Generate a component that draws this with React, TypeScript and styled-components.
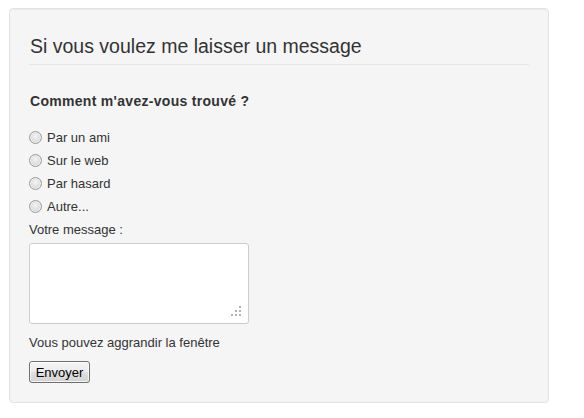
import React from "react";
import styled, { createGlobalStyle } from "styled-components";

const GlobalStyle = createGlobalStyle`
  html, body { margin: 0; padding: 0; background: #ffffff; }
  body {
    font-family: "Liberation Sans", Arial, sans-serif;
    font-size: 13px;
    color: #333333;
  }
`;

const Page = styled.div`
  padding: 8px 0 0 9px;
`;

const Well = styled.form`
  box-sizing: border-box;
  width: 540px;
  padding: 19px;
  background: #f5f5f5;
  border: 1px solid #e3e3e3;
  border-radius: 4px;
  box-shadow: inset 0 1px 1px rgba(0, 0, 0, 0.05);
  display: flex;
  flex-direction: column;
  align-items: flex-start;
`;

const Legend = styled.h2`
  align-self: stretch;
  margin: 0;
  font-size: 19.5px;
  font-weight: normal;
  line-height: 36px;
  color: #333333;
  border-bottom: 1px solid #e6e6e6;
  padding-left: 1px;
`;

const Question = styled.h3`
  margin: 26px 0 0;
  padding-left: 1px;
  font-size: 14px;
  font-weight: bold;
  line-height: 20px;
  letter-spacing: 0.3px;
  color: #333333;
`;

const Options = styled.div`
  margin-top: 15px;
  display: flex;
  flex-direction: column;
`;

const Option = styled.label`
  display: flex;
  align-items: center;
  height: 23px;
  line-height: 23px;
  gap: 5px;
  cursor: pointer;
`;

const Radio = styled.input.attrs({ type: "radio" })`
  appearance: none;
  -webkit-appearance: none;
  box-sizing: border-box;
  width: 13px;
  height: 13px;
  margin: 0;
  border-radius: 50%;
  border: 1px solid #9a9a9a;
  background: radial-gradient(circle at 50% 40%, #f4f4f4 0%, #e2e2e2 45%, #c9c9c9 100%);
  box-shadow: inset 0 0 0 1px #f0f0f0;
`;

const FieldLabel = styled.label`
  display: block;
  line-height: 23px;
`;

const AreaWrap = styled.div`
  position: relative;
  margin-top: 2px;
  width: 220px;
  height: 81px;
`;

const TextArea = styled.textarea`
  box-sizing: border-box;
  display: block;
  width: 220px;
  height: 81px;
  margin: 0;
  padding: 4px;
  resize: none;
  background: #ffffff;
  border: 1px solid #cccccc;
  border-radius: 3px;
  font-family: "Liberation Sans", Arial, sans-serif;
  font-size: 13px;
  color: #333333;
  outline: none;
`;

const Grip = styled.svg`
  position: absolute;
  right: 8px;
  bottom: 8px;
  pointer-events: none;
`;

const Hint = styled.p`
  margin: 7px 0 0;
  line-height: 23px;
`;

const Button = styled.button`
  box-sizing: border-box;
  margin-top: 7px;
  height: 22px;
  width: 61px;
  padding: 0;
  font-family: "Liberation Sans", Arial, sans-serif;
  font-size: 13px;
  color: #000000;
  border: 1px solid #707070;
  border-radius: 3px;
  background: linear-gradient(#f4f4f4 0%, #ececec 50%, #e0e0e0 51%, #d4d4d4 100%);
  box-shadow: inset 0 0 0 1px rgba(255, 255, 255, 0.7);
  cursor: pointer;
`;

const options = ["Par un ami", "Sur le web", "Par hasard", "Autre..."];

export default function App() {
  return (
    <>
      <GlobalStyle />
      <Page>
        <Well onSubmit={(e) => e.preventDefault()}>
          <Legend>Si vous voulez me laisser un message</Legend>
          <Question>Comment m'avez-vous trouvé ?</Question>
          <Options>
            {options.map((o) => (
              <Option key={o}>
                <Radio name="source" value={o} />
                {o}
              </Option>
            ))}
          </Options>
          <FieldLabel htmlFor="msg">Votre message :</FieldLabel>
          <AreaWrap>
            <TextArea id="msg" />
            <Grip width="10" height="10" viewBox="0 0 10 10">
              <rect x="8" y="0" width="2" height="2" fill="#b0b0b0" />
              <rect x="8" y="4" width="2" height="2" fill="#b0b0b0" />
              <rect x="4" y="4" width="2" height="2" fill="#b0b0b0" />
              <rect x="8" y="8" width="2" height="2" fill="#b0b0b0" />
              <rect x="4" y="8" width="2" height="2" fill="#b0b0b0" />
              <rect x="0" y="8" width="2" height="2" fill="#b0b0b0" />
            </Grip>
          </AreaWrap>
          <Hint>Vous pouvez aggrandir la fenêtre</Hint>
          <Button type="submit">Envoyer</Button>
        </Well>
      </Page>
    </>
  );
}
